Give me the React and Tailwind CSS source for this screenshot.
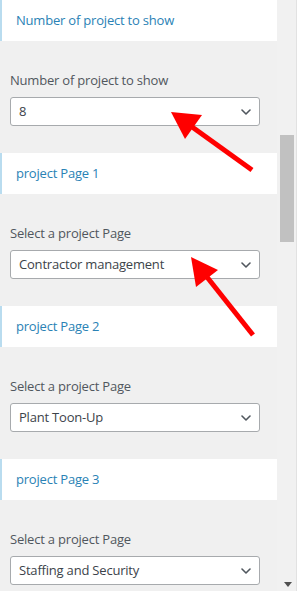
import React from 'react';

const sections = [
    { title: 'Number of project to show', label: 'Number of project to show', value: '8' },
    { title: 'project Page 1', label: 'Select a project Page', value: 'Contractor management' },
    { title: 'project Page 2', label: 'Select a project Page', value: 'Plant Toon-Up' },
    { title: 'project Page 3', label: 'Select a project Page', value: 'Staffing and Security' },
];

const Chevron = () => (
    <svg width="10" height="6" viewBox="0 0 10 6" fill="none">
        <path d="M1 1l4 4 4-4" stroke="#50575e" strokeWidth="1.6" strokeLinecap="round" strokeLinejoin="round" />
    </svg>
);

const Section = ({ title, label, value }) => (
    <div className="pb-[27px]">
        <div className="h-[41px] bg-white border-l-2 border-[#b9dcef] flex items-center pl-[14px]">
            <span className="text-[13px] tracking-[-0.2px] text-[#2a82b5]">{title}</span>
        </div>
        <div className="pt-[30px] pl-[10px]">
            <div className="text-[13px] tracking-[-0.2px] leading-[18px] text-[#50575e] mb-[8px]">{label}</div>
            <div className="w-[250px] h-[29px] bg-white border border-[#a7aaad] rounded-[3px] flex items-center justify-between pl-[8px] pr-[8px]">
                <span className="text-[13px] tracking-[-0.2px] text-[#3c434a]">{value}</span>
                <Chevron />
            </div>
        </div>
    </div>
);

const Arrows = () => (
    <svg className="absolute inset-0 pointer-events-none" width="297" height="591" viewBox="0 0 297 591">
        <line x1="252" y1="170" x2="188" y2="124" stroke="#ff0000" strokeWidth="5" />
        <polygon points="171,112 202,115 185,139" fill="#ff0000" />
        <line x1="253" y1="335" x2="203" y2="272" stroke="#ff0000" strokeWidth="5" />
        <polygon points="191,257 218,270 196,287" fill="#ff0000" />
    </svg>
);

export default function App() {
    return (
        <div className="relative w-[297px] h-[591px] overflow-hidden bg-[#f0f0f0] flex" style={{ fontFamily: '"Open Sans", "Noto Sans", sans-serif' }}>
            <div className="w-[277px] shrink-0">
                {sections.map((s, i) => <Section key={i} {...s} />)}
            </div>
            <div className="w-[20px] relative bg-[#f1f1f1] border-r border-[#e2e2e2]">
                <div className="absolute left-[3px] top-[135px] w-[14px] h-[107px] bg-[#c1c1c1]" />
                <div className="absolute left-[7px] bottom-[4px] w-0 h-0 border-l-[4px] border-r-[4px] border-t-[5px] border-l-transparent border-r-transparent border-t-[#505050]" />
            </div>
            <Arrows />
        </div>
    );
}
